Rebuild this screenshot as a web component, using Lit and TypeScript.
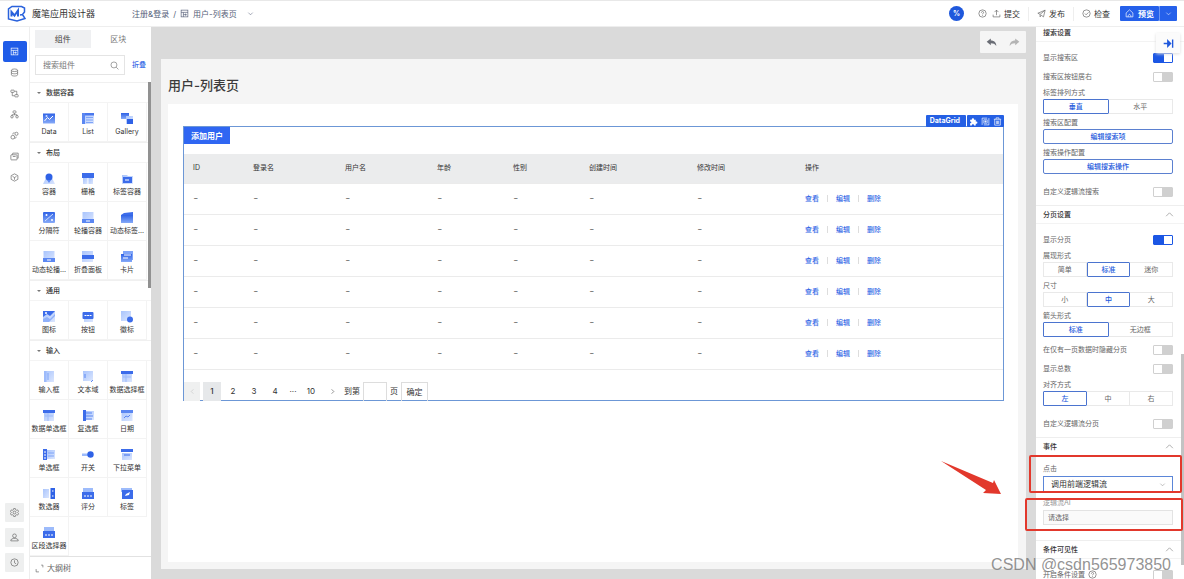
import { LitElement, html, svg, css } from "lit";
import { customElement, state } from "lit/decorators.js";
import { classMap } from "lit/directives/class-map.js";

const glyphs: Record<string, any> = {
  data: svg`<rect x="1" y="1.500" width="12" height="10" fill="url(#deep)"/><path d="M2.500 9l3-3.500 2 2L11 4" stroke="#fff" fill="none"/><circle cx="4.500" cy="4" r="1" fill="#cfe0ff"/>`,
  list: svg`<rect x="1" y="1" width="12" height="11" fill="url(#soft)"/><rect x="1" y="1" width="12" height="2.500" fill="#4a78ee"/><rect x="1" y="1" width="3" height="11" fill="#5b87f2"/><path d="M5 5.500h7M5 8h7M5 10.500h7" stroke="#7fa4f8"/>`,
  gallery: svg`<rect x="1" y="1" width="8" height="6" fill="url(#deep)"/><rect x="6" y="4" width="7" height="8" fill="url(#soft)"/><rect x="7" y="7" width="6" height="5" fill="#2f62e6"/>`,
  box: svg`<path d="M1 12l3-6h6l3 6z" fill="url(#soft)"/><circle cx="7" cy="5" r="3.500" fill="#2f62e6"/><path d="M5 8h4l-2 3z" fill="#5b87f2"/>`,
  columns: svg`<rect x="1" y="1" width="12" height="5" fill="#3c6cea"/><rect x="2" y="6" width="4.500" height="6" fill="url(#soft)"/><rect x="7.500" y="6" width="4.500" height="6" fill="url(#soft)"/>`,
  tabbox: svg`<path d="M2 3h5l1 1h5v8H2z" fill="url(#soft)"/><rect x="3" y="5" width="9" height="6" fill="#3c6cea"/><path d="M5 8h4" stroke="#fff"/>`,
  divider: svg`<rect x="1" y="1" width="12" height="11" rx="1" fill="url(#deep)"/><path d="M3 10l8-7" stroke="#cfe0ff"/><circle cx="4.500" cy="4" r="1" fill="#fff"/><circle cx="10" cy="9" r="1" fill="#fff"/>`,
  carousel: svg`<rect x="1.500" y="1" width="11" height="11" fill="url(#soft)"/><rect x="1" y="8" width="12" height="4" fill="#5b87f2"/><path d="M5 10h4" stroke="#fff"/>`,
  dyntab: svg`<rect x="1" y="4" width="12" height="8" fill="url(#deep)"/><path d="M1 4l3-2 9-1v3z" fill="#3c6cea"/>`,
  fold: svg`<rect x="1" y="1" width="11" height="11" fill="url(#soft)"/><rect x="1" y="5" width="12" height="4" fill="#3c6cea"/>`,
  card: svg`<rect x="3" y="1" width="10" height="9" fill="#7fa4f8"/><rect x="1" y="4" width="11" height="8" fill="url(#deep)"/><path d="M4 5h7M3 8h5" stroke="#fff"/>`,
  image: svg`<rect x="1" y="1" width="12" height="11" fill="url(#soft)"/><path d="M1 1h12l-5 5-3-2-4 3z" fill="#3c6cea"/><path d="M1 12V9l4-2 3 2 5-5v2l-6 6z" fill="#8fb0fa"/><circle cx="4" cy="3" r="1" fill="#fff"/>`,
  button: svg`<rect x="3" y="2" width="9" height="10" fill="url(#soft)"/><rect x="1.500" y="2" width="11" height="7" rx="1" fill="#3c6cea"/><path d="M3.500 5.500h7" stroke="#fff" stroke-dasharray="2 .6"/>`,
  badge: svg`<rect x="1" y="1" width="10" height="10" fill="url(#soft)"/><circle cx="10" cy="9.500" r="3" fill="#3c6cea"/>`,
  input: svg`<rect x="2" y="1" width="10" height="11" fill="url(#soft)"/><rect x="2" y="1" width="2.500" height="11" fill="#9dbbfb"/><path d="M6 3v7" stroke="#7fa4f8"/>`,
  area: svg`<rect x="2" y="1" width="10" height="10" fill="url(#soft)"/><path d="M4 4v4M10 12l2-2" stroke="#5b87f2"/>`,
  dataselect: svg`<rect x="1" y="1" width="12" height="3" fill="#3c6cea"/><rect x="2" y="4" width="10" height="8" fill="url(#soft)"/><path d="M3 7h8M6 4v8" stroke="#9dbbfb"/>`,
  check: svg`<rect x="2" y="1" width="3" height="11" fill="#3c6cea"/><rect x="5" y="2" width="8" height="9" fill="url(#soft)"/><path d="M5 4h6M5 7h7M5 10h6" stroke="#5b87f2"/>`,
  date: svg`<rect x="1.500" y="1" width="11" height="11" fill="url(#soft)"/><rect x="1" y="1" width="12" height="3" fill="#5b87f2"/><path d="M4 9l2-2 2 1 2-2" stroke="#5b87f2" fill="none"/>`,
  radio: svg`<rect x="1" y="1" width="4" height="11" fill="#3c6cea"/><rect x="5" y="2" width="8" height="9" fill="url(#soft)"/><path d="M2 4h2M2 7h2M2 10h2" stroke="#fff"/><path d="M6 5h6M6 8h6" stroke="#7fa4f8"/>`,
  toggle: svg`<rect x="1" y="5.500" width="8" height="2.500" fill="#9dbbfb"/><circle cx="9.500" cy="6.500" r="3.200" fill="#2f62e6"/>`,
  dropdown: svg`<rect x="1" y="1" width="12" height="3" fill="#3c6cea"/><rect x="2" y="5" width="10" height="7" fill="url(#soft)"/><path d="M4 7h6" stroke="#3c6cea"/>`,
  transfer: svg`<rect x="1" y="2" width="6" height="9" fill="url(#soft)"/><rect x="8.500" y="1" width="4.500" height="11" fill="#2f62e6"/><path d="M10 4h1.500M10 9h1.500" stroke="#fff"/>`,
  rate: svg`<rect x="2" y="1" width="10" height="6" fill="#9dbbfb"/><rect x="1" y="5" width="12" height="7" fill="#3c6cea"/><path d="M3 9h8" stroke="#fff" stroke-dasharray="2 1"/>`,
  tag: svg`<rect x="1" y="1" width="11" height="4" fill="#9dbbfb"/><rect x="2" y="3" width="11" height="9" fill="#3c6cea"/><path d="M5 9l1-2 4-2-1 3z" fill="#fff"/>`,
};

const lines: Record<string, any> = {
  page: svg`<rect x="2" y="2" width="12" height="12"/><path d="M2 6h12M6 6v8M10 8v4M6 10h6"/>`,
  db: svg`<ellipse cx="8" cy="4" rx="5.500" ry="2.300"/><path d="M2.500 4v8c0 3 11 3 11 0V4M2.500 8c0 3 11 3 11 0"/>`,
  flow: svg`<rect x="1.500" y="2" width="6" height="4" rx="1"/><rect x="8.500" y="10" width="6" height="4" rx="1"/><path d="M8 4h4v6M8 12H4V6"/>`,
  tree: svg`<rect x="5.500" y="1.500" width="5" height="4" rx="1"/><circle cx="3.500" cy="12" r="2.200"/><circle cx="12.500" cy="12" r="2.200"/><path d="M8 5.500v3M3.500 10V8.500h9V10"/>`,
  link: svg`<circle cx="5" cy="11" r="3.300"/><circle cx="11.500" cy="5" r="2.800"/><path d="M5 6c0-2 1-3 3-3M11 10c0 2-1 3-3 3"/>`,
  card: svg`<rect x="1.500" y="5" width="11" height="9" rx="1"/><path d="M4 5l1-3h9.500v9H13M5 8h5"/>`,
  cube: svg`<path d="M8 1.500l6 3.200v6.600l-6 3.200-6-3.200V4.700zM4.500 6L8 8l3.500-2M8 8v4"/>`,
  gear: svg`<path d="M6.500 1h3l.6 2.200 1.500.8 2.100-.6 1.500 2.600L13.600 8l1.600 2-1.500 2.600-2.100-.6-1.500.8-.6 2.200h-3l-.6-2.200-1.500-.8-2.100.6L.8 10l1.600-2L.8 6l1.500-2.600 2.100.6 1.500-.8z"/><circle cx="8" cy="8" r="2.500"/>`,
  user: svg`<circle cx="8" cy="5" r="3.300"/><path d="M1.500 14v-2l4-2.500h5l4 2.500v2z"/>`,
  clock: svg`<circle cx="8" cy="8" r="6.500"/><path d="M8 4v4.500l3 2"/>`,
  help: svg`<circle cx="8" cy="8" r="6.500"/><path d="M6 6.500c0-3 4-2.500 4-.5C10 7.500 8 7.500 8 9.500M8 11v1.300"/>`,
  upload: svg`<path d="M8 11V2M4.500 5.500L8 2l3.500 3.500M2 10v4h12v-4"/>`,
  send: svg`<path d="M1.500 7.500L14.500 2l-3 12-4-3-2 3V9.500zM5.500 9.500L14 2.500"/>`,
  checked: svg`<circle cx="8" cy="8" r="6.500"/><path d="M5 8l2.300 2.300L11.500 6"/>`,
  home: svg`<path d="M2 7l6-5.500L14 7v7H2zM5.500 14c0-6 5-6 5 0"/>`,
  down: svg`<path d="M3 6l5 5 5-5"/>`,
  up: svg`<path d="M2 11l6-6 6 6"/>`,
  left: svg`<path d="M10 3L5 8l5 5"/>`,
  right: svg`<path d="M6 3l5 5-5 5"/>`,
  search: svg`<circle cx="7" cy="7" r="5.300"/><path d="M11 11l4 4"/>`,
  expand: svg`<path d="M2 9v5h5M11 2h3v4"/>`,
  copy: svg`<path d="M2 14V2h9M5 14h9V2"/><path d="M5 5h6v6H5zM8 6v4M6 8h4"/>`,
  trash: svg`<path d="M1.500 4h13M5.500 4V1.500h5V4M3 4v10.500h10V4M6 6.500v6M8 6.500v6M10 6.500v6"/>`,
  dock: svg`<path d="M1 8h9M7 4l4 4-4 4zM14 2v12" stroke-width="2"/>`,
};
const line = (name: string, cls = "i9") =>
  html`<svg class="line ${cls}" viewBox="0 0 16 16" aria-hidden="true">${lines[name]}</svg>`;

const groups: [string, [string, string][]][] = [
  ["数据容器", [["data", "Data"], ["list", "List"], ["gallery", "Gallery"]]],
  ["布局", [["box", "容器"], ["columns", "栅格"], ["tabbox", "标签容器"], ["divider", "分隔符"], ["carousel", "轮播容器"], ["dyntab", "动态标签..."], ["carousel", "动态轮播..."], ["fold", "折叠面板"], ["card", "卡片"]]],
  ["通用", [["image", "图标"], ["button", "按钮"], ["badge", "徽标"]]],
  ["输入", [["input", "输入框"], ["area", "文本域"], ["dataselect", "数据选择框"], ["dataselect", "数据单选框"], ["check", "复选框"], ["date", "日期"], ["radio", "单选框"], ["toggle", "开关"], ["dropdown", "下拉菜单"], ["transfer", "数选器"], ["rate", "评分"], ["tag", "标签"], ["rate", "区段选择器"]]],
];

@customElement("app-root")
export class AppRoot extends LitElement {
  @state() private picks: Record<string, string> = {
    标签排列方式: "垂直", 展现形式: "标准", 尺寸: "中", 箭头形式: "标准", 对齐方式: "左",
  };

  static styles = css`
    :host { display: grid; grid-template-rows: 27px minmax(0, 1fr); position: relative; height: 100vh; overflow: hidden; background: #fff; color: #333; font: 7px/12px Inter, "Noto Sans CJK SC", sans-serif; }
    * { box-sizing: border-box; }
    button, input, select { font: inherit; color: inherit; margin: 0; padding: 0; border: 0; background: none; border-radius: 0; min-width: 0; }
    button { display: flex; align-items: center; justify-content: center; white-space: nowrap; }
    a { color: #3569e6; text-decoration: none; }
    h1, h2, h3 { margin: 0; }
    svg { display: block; flex: none; }
    .line { fill: none; stroke: currentColor; stroke-width: 1.2; }
    .i7 { width: 7px; height: 7px; } .i9 { width: 9px; height: 9px; } .i11 { width: 11px; height: 11px; }

    header { display: flex; align-items: center; border-top: 1px solid #e8e8e8; border-bottom: 1px solid #eee; padding: 0 7px; font-size: 8px; }
    .logo { width: 19px; height: 17px; }
    .brand { font-size: 9px; margin: 0 37px 0 6px; font-weight: 400; }
    .crumbs { display: flex; align-items: center; gap: 4px; flex: 1; color: #555e78; }
    .crumbs a { color: inherit; }
    .crumbs .i7 { margin-left: 6px; }
    .avatar { width: 15px; height: 15px; border-radius: 50%; background: #1f58dc; color: #fff; font-weight: 700; font-size: 7px; margin-right: 14px; }
    .help { color: #666; }
    .act { gap: 3px; padding: 0 8px; height: 14px; border-right: 1px solid #eee; }
    .act svg { color: #666; }
    .act.first { padding-left: 5px; }
    .act.last { border: 0; padding-right: 10px; }
    .cta { display: flex; color: #fff; font-weight: 700; height: 15px; }
    .cta button { background: #2560ea; padding: 0 5px; gap: 4px; border-radius: 1px; }
    .cta button + button { border-left: 1px solid #6d96f3; }

    .work { display: grid; grid-template-columns: 30px 121px minmax(0, 1fr) 148px; min-height: 0; }
    .rail { display: flex; flex-direction: column; align-items: center; border-right: 1px solid #eee; padding: 14px 0 7px; color: #666; }
    .rail button { width: 24px; height: 21px; }
    .rail .on { background: #1f5ce8; color: #fff; border-radius: 2px; }
    .rail .space { flex: 1; }
    .rail .low { width: 19px; height: 19px; background: #eeefef; margin-top: 6px; border-radius: 1px; }

    .lib { display: flex; flex-direction: column; position: relative; min-height: 0; }
    .tabs { display: flex; margin: 3px 5px 0; }
    .tabs button { flex: 1; height: 18px; color: #777; font-size: 8px; }
    .tabs .on { background: #eff0f2; color: #444; }
    .find { display: flex; align-items: center; gap: 7px; margin: 7px 5px 7px; }
    .find a { font-weight: 500; }
    .box { flex: 1; display: flex; align-items: center; border: 1px solid #e4e4e4; height: 20px; padding: 0 5px 0 7px; color: #777; min-width: 0; }
    .box input { flex: 1; outline: 0; font-size: 8px; }
    .box input::placeholder { color: #777; opacity: 1; }
    .group h2 { display: flex; align-items: center; gap: 5px; height: 21px; padding-left: 7px; border-top: 1px solid #f0f0f0; border-bottom: 1px solid #f4f4f4; font-size: 7px; font-weight: 500; }
    .tri { border: 2px solid transparent; border-top: 2px solid #777; border-bottom: 0; }
    .cells { display: grid; grid-template-columns: repeat(3, 39px); }
    .cells button { flex-direction: column; justify-content: flex-start; gap: 1px; height: 39px; padding-top: 9px; border-right: 1px solid #f3f3f3; border-bottom: 1px solid #f3f3f3; }
    .cells button svg { width: 14px; height: 13px; }
    .outline { flex: 1; justify-content: flex-start; gap: 3px; border-top: 1px solid #e2e2e2; padding-left: 5px; color: #666; font-size: 8px; }
    .bar { position: absolute; right: 0; top: 55px; width: 3px; height: 206px; background: #919191; }

    main { background: #dadada; display: flex; flex-direction: column; padding: 4px 10px 10px; min-height: 0; }
    .undo { display: flex; align-self: flex-end; background: #f5f5f5; height: 22px; margin-bottom: 6px; border-radius: 1px; }
    .undo button { width: 23px; color: #6a6d75; }
    .undo button + button { color: #b4b4b4; }
    .page { flex: 1; background: #f5f5f5; padding: 17px 8px 7px 7px; display: flex; flex-direction: column; min-height: 0; }
    .page h1 { font-size: 13px; line-height: 18px; font-weight: 500; margin-bottom: 10px; color: #3c3c3c; }
    .sheet { flex: 1; background: #fff; padding: 22px 14px 0 15px; }
    .grid { position: relative; border: 1px solid #6c97d6; height: 275px; }
    .tools { position: absolute; right: -1px; bottom: 100%; display: flex; gap: 1px; color: #fff; height: 12px; }
    .tools > * { background: #2560e4; border-radius: 1px; }
    .tools b { padding: 0 6px 0 4px; }
    .tools div { display: flex; align-items: center; gap: 3px; padding: 0 2px; }
    .add { background: #2f66f2; color: #fff; font-size: 8px; font-weight: 700; width: 46px; height: 17px; margin-bottom: 10px; }
    table { width: 100%; border-collapse: collapse; table-layout: fixed; }
    th, td { text-align: left; padding: 0 0 0 9px; height: 31px; border-bottom: 1px solid #ebebeb; }
    th { background: #ebeced; height: 29px; font-weight: 400; }
    td { padding-left: 10px; } td:last-child { padding-left: 9px; }
    .c60 { width: 60px; } .c92 { width: 92px; } .c76 { width: 76px; } .c108 { width: 108px; }
    .ops { display: flex; align-items: center; font-weight: 500; }
    .ops a + a { margin-left: 8px; border-left: 1px solid #ddd; padding-left: 8px; line-height: 7px; }
    .pager { display: flex; align-items: center; gap: 3px; margin-top: 12px; font-size: 8px; height: 19px; }
    .pager button { width: 18px; height: 19px; }
    .pager .prev { width: 16px; background: #eff0f0; color: #bbb; }
    .pager .on { background: #e6e8ea; font-weight: 500; }
    .pager .dots { width: 12px; text-align: center; }
    .pager label { display: flex; align-items: center; gap: 3px; }
    .pager input { width: 24px; height: 19px; border: 1px solid #ddd; border-bottom: 0; }
    .pager .ok { width: 27px; border: 1px solid #ddd; border-bottom: 0; }

    aside { position: relative; overflow: hidden; color: #666; }
    .dock { position: absolute; right: 4px; top: 6px; width: 24px; height: 20px; background: #fbfbfb; color: #1f58dc; box-shadow: 0 1px 3px #ddd; }
    .set { padding: 6px 11px 4px 7px; border-bottom: 1px solid #eee; }
    .head { display: flex; justify-content: space-between; align-items: center; height: 18px; padding: 0 10px 0 7px; border-bottom: 1px solid #f3f3f3; color: #333; }
    .head h3 { font-size: 7px; font-weight: 500; }
    .head.cut { height: 15px; padding-bottom: 3px; }
    .head svg { color: #888; }
    .sw { display: flex; align-items: center; justify-content: space-between; height: 19px; }
    .sw.gap { margin-top: 8px; }
    .sw + .field { margin-top: 1px; }
    .sw input { appearance: none; width: 20px; height: 10px; border: 1px solid #d0d0d0; border-radius: 1px; background: linear-gradient(90deg, #fff 45%, #d0d0d0 45%); }
    .sw input:checked { border-color: #1b56e4; background: linear-gradient(90deg, #1b56e4 55%, #fff 55%); }
    .field { display: flex; flex-direction: column; margin-bottom: 3px; }
    .seg { display: flex; height: 15px; }
    .seg button { flex: 1; border: 1px solid #e9e9e9; border-left: 0; }
    .seg button:first-child { border-left: 1px solid #e9e9e9; }
    .seg button.on { border: 1px solid #4b74cf; color: #2459dc; font-weight: 500; border-radius: 1px; }
    .wide { height: 15px; border: 1px solid #5b80d0; border-radius: 2px; color: #2459dc; font-weight: 500; }
    .events { padding-top: 7px; padding-bottom: 10px; }
    .events .field { margin-bottom: 5px; gap: 1px; }
    .pick { position: relative; display: flex; align-items: center; border: 1px solid #5b86d8; height: 16px; color: #333; }
    .pick select { appearance: none; width: 100%; height: 100%; padding: 0 16px 0 7px; outline: 0; font-size: 8px; }
    .pick svg { position: absolute; right: 6px; pointer-events: none; color: #888; }
    .text { height: 15px; border: 1px solid #e3e3e3; background: #fafafa; padding: 0 4px; }
    .text::placeholder { color: #666; opacity: 1; }
    .faded { color: #999; }
    .tip { display: flex; gap: 3px; align-items: center; }
    .track { position: absolute; right: 0; top: 327px; width: 3px; height: 211px; background: #c3c3c3; }

    .mark { position: absolute; border: 2px solid #e2382c; border-radius: 2px; pointer-events: none; }
    .m1 { right: 2px; top: 455px; width: 153px; height: 38px; }
    .m2 { right: 1px; top: 498px; width: 158px; height: 33px; }
    .arrow { position: absolute; right: 182px; top: 460px; width: 61px; height: 35px; }
    .wm { position: absolute; right: 13px; bottom: 4px; font: 16px/20px "Liberation Sans", sans-serif; color: #777c; pointer-events: none; }
  `;

  private seg(label: string, options: string[]) {
    return html`<div class="field" role="group" aria-label=${label}><span>${label}</span><div class="seg">
      ${options.map((o) => html`<button class=${classMap({ on: this.picks[label] === o })} @click=${() => (this.picks = { ...this.picks, [label]: o })}>${o}</button>`)}
    </div></div>`;
  }
  private sw(label: string, on = false, gap = false) {
    return html`<label class=${classMap({ sw: true, gap })}>${label}<input type="checkbox" .checked=${on}></label>`;
  }
  private head(label: string) {
    return html`<div class="head"><h3>${label}</h3>${line("up")}</div>`;
  }

  render() {
    return html`
      <header>
        <svg class="logo" viewBox="0 0 19 17" fill="none" stroke="#2a62dc" stroke-width="1.500"><path d="M15.500 9.500l2.500 4-8 2.500-8.500-2V4L5 1.500h9.500L17.500 3v4l-2 2.500-2.500.5"/><path d="M4.500 11.500V7l3 3.500L11 5.500v6" stroke-width="2"/></svg>
        <h2 class="brand">魔笔应用设计器</h2>
        <nav class="crumbs"><a href="#">注册&amp;登录</a><span>/</span>${line("page")}<span>用户-列表页</span>${line("down", "i7")}</nav>
        <button class="avatar">%</button>
        ${line("help", "i9 help")}
        <button class="act first">${line("upload")}提交</button>
        <button class="act">${line("send")}发布</button>
        <button class="act last">${line("checked")}检查</button>
        <div class="cta"><button>${line("home")}预览</button><button aria-label="更多">${line("down", "i7")}</button></div>
      </header>
      <div class="work">
        <nav class="rail">
          ${["page", "db", "flow", "tree", "link", "card", "cube"].map((n, i) => html`<button class=${classMap({ on: i === 0 })} aria-label=${n}>${line(n)}</button>`)}
          <span class="space"></span>
          ${["gear", "user", "clock"].map((n) => html`<button class="low" aria-label=${n}>${line(n, "i9")}</button>`)}
        </nav>
        <section class="lib">
          <svg width="0" height="0" style="position:absolute"><defs>
            <linearGradient id="soft" x1="0" y1="0" x2="1" y2="1"><stop stop-color="#a9c4fc"/><stop offset="1" stop-color="#dbe6fe"/></linearGradient>
            <linearGradient id="deep" x1="0" y1="0" x2="0" y2="1"><stop stop-color="#2f62e6"/><stop offset="1" stop-color="#86aaf8"/></linearGradient>
          </defs></svg>
          <div class="tabs"><button class="on">组件</button><button>区块</button></div>
          <div class="find"><label class="box"><input type="text" placeholder="搜索组件" aria-label="搜索组件">${line("search")}</label><a href="#">折叠</a></div>
          ${groups.map(([name, items]) => html`<div class="group"><h2><i class="tri"></i>${name}</h2><div class="cells">
            ${items.map(([icon, label]) => html`<button><svg viewBox="0 0 14 13">${glyphs[icon]}</svg>${label}</button>`)}
          </div></div>`)}
          <button class="outline">${line("expand")}大纲树</button>
          <i class="bar"></i>
        </section>
        <main>
          <div class="undo">
            <button aria-label="撤销"><svg class="i11" viewBox="0 0 16 16"><path d="M1 7l6-5v3c5 0 8 3 8 8-2-3-4-4-8-4v3z" fill="currentColor"/></svg></button>
            <button aria-label="重做"><svg class="i11" viewBox="0 0 16 16"><path d="M15 7L9 2v3c-5 0-8 3-8 8 2-3 4-4 8-4v3z" fill="currentColor"/></svg></button>
          </div>
          <div class="page">
            <h1>用户-列表页</h1>
            <div class="sheet"><div class="grid">
              <div class="tools"><b>DataGrid</b><div>
                <svg class="i9" viewBox="0 0 16 16"><path d="M2 5h3c-1-4 5-4 4 0h3v3c4-1 4 5 0 4v3H9c0-3-4-3-4 0H2v-4c3 0 3-3 0-3z" fill="#fff"/></svg>
                ${line("copy")}${line("trash")}</div></div>
              <button class="add">添加用户</button>
              <table>
                <colgroup><col class="c60"><col class="c92"><col class="c92"><col class="c76"><col class="c76"><col class="c108"><col class="c108"><col></colgroup>
                <thead><tr>${["ID", "登录名", "用户名", "年龄", "性别", "创建时间", "修改时间", "操作"].map((t) => html`<th>${t}</th>`)}</tr></thead>
                <tbody>${Array.from({ length: 6 }, () => html`<tr>${Array.from({ length: 7 }, () => html`<td>–</td>`)}<td><div class="ops"><a href="#">查看</a><a href="#">编辑</a><a href="#">删除</a></div></td></tr>`)}</tbody>
              </table>
              <div class="pager">
                <button class="prev" aria-label="上一页">${line("left", "i7")}</button>
                <button class="on">1</button><button>2</button><button>3</button><button>4</button><span class="dots">···</span><button>10</button>
                <button aria-label="下一页">${line("right", "i7")}</button>
                <label>到第<input type="text">页</label><button class="ok">确定</button>
              </div>
            </div></div>
          </div>
        </main>
        <aside>
          <div class="head cut"><h3>搜索设置</h3></div>
          <div class="set">
            ${this.sw("显示搜索区", true)}${this.sw("搜索区按钮居右")}
            ${this.seg("标签排列方式", ["垂直", "水平"])}
            <div class="field"><span>搜索区配置</span><button class="wide">编辑搜索项</button></div>
            <div class="field"><span>搜索操作配置</span><button class="wide">编辑搜索操作</button></div>
            ${this.sw("自定义逻辑流搜索", false, true)}
          </div>
          ${this.head("分页设置")}
          <div class="set">
            ${this.sw("显示分页", true)}
            ${this.seg("展现形式", ["简单", "标准", "迷你"])}${this.seg("尺寸", ["小", "中", "大"])}${this.seg("箭头形式", ["标准", "无边框"])}
            ${this.sw("在仅有一页数据时隐藏分页")}${this.sw("显示总数")}
            ${this.seg("对齐方式", ["左", "中", "右"])}
            ${this.sw("自定义逻辑流分页", false, true)}
          </div>
          ${this.head("事件")}
          <div class="set events">
            <div class="field"><label for="click">点击</label><div class="pick"><select id="click"><option>调用前端逻辑流</option></select>${line("down", "i7")}</div></div>
            <div class="field"><label class="faded" for="flow">逻辑流AI</label><input class="text" id="flow" type="text" placeholder="请选择"></div>
          </div>
          ${this.head("条件可见性")}
          <div class="set"><label class="sw"><span class="tip">开启条件设置 ${line("help")}</span><input type="checkbox"></label></div>
          <button class="dock" aria-label="收起">${line("dock", "i11")}</button>
          <i class="track"></i>
        </aside>
      </div>
      <i class="mark m1"></i><i class="mark m2"></i>
      <svg class="arrow" viewBox="0 0 61 35"><path d="M0 1L52 23l1-3 7 14-18-1 3-3z" fill="#e2382c"/></svg>
      <span class="wm">CSDN @csdn565973850</span>
    `;
  }
}
